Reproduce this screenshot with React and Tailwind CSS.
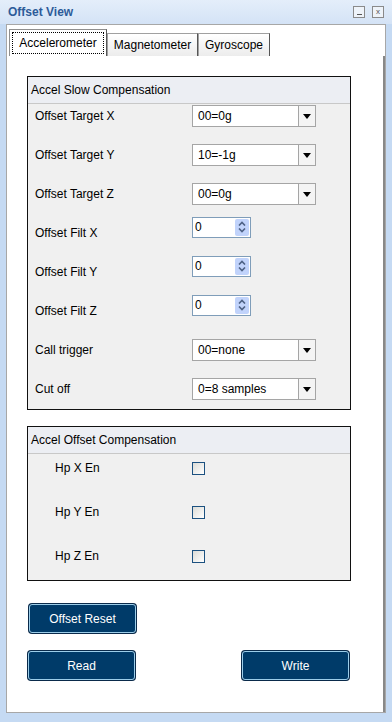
import React from "react";

const font = { fontFamily: '"Liberation Sans", Arial, sans-serif' };

function Combo({ value }) {
  return (
    <div className="flex h-[22px] w-[124px] border border-[#a5a5a5] bg-white">
      <div className="flex-1 flex items-center pl-[5px] text-[12px] text-black">{value}</div>
      <div className="w-[17px] border-l border-[#a5a5a5] bg-[#f4f4f4] flex items-center justify-center">
        <svg width="8" height="5" viewBox="0 0 8 5"><path d="M0 0h8L4 5z" fill="#000" /></svg>
      </div>
    </div>
  );
}

function Spinner() {
  return (
    <div className="flex h-[21px] w-[59px] mb-[12px] border border-[#7f9db9] bg-white">
      <div className="flex-1 flex items-center pl-[2px] text-[12px] text-black">0</div>
      <div className="w-[14px] my-[1px] mr-[1px] rounded-[2px] bg-[#c1d3fb] flex flex-col items-center justify-center gap-[2px]">
        <svg width="8" height="5" viewBox="0 0 8 5"><path d="M1 4.5L4 1.5L7 4.5" stroke="#4d6185" strokeWidth="1.6" fill="none" /></svg>
        <svg width="8" height="5" viewBox="0 0 8 5"><path d="M1 0.5L4 3.5L7 0.5" stroke="#4d6185" strokeWidth="1.6" fill="none" /></svg>
      </div>
    </div>
  );
}

function Row({ label, children }) {
  return (
    <div className="flex items-center h-[22px]">
      <div className="w-[164px] pl-[7px] text-[12px] text-black">{label}</div>
      {children}
    </div>
  );
}

function CheckRow({ label }) {
  return (
    <div className="flex items-center h-[22px]">
      <div className="w-[164px] pl-[27px] text-[12px] text-black">{label}</div>
      <div className="w-[13px] h-[13px] border border-[#1c5180] bg-gradient-to-br from-[#dcdcd7] to-white" />
    </div>
  );
}

function Btn({ children }) {
  return (
    <div className="w-[107px] h-[29px] rounded-[3px] border border-[#9ccde9] bg-[#003b69] shadow-[0_0_0_1px_#0a2a4a] flex items-center justify-center text-[12px] text-white">
      {children}
    </div>
  );
}

export default function App() {
  return (
    <div style={font} className="w-[392px] h-[722px] bg-[#c5daf3] flex flex-col overflow-hidden">
      <div className="h-[24px] flex items-center justify-between pl-[8px] pr-[8px] bg-gradient-to-b from-[#e4eefa] to-[#d4e3f6]">
        <div className="text-[12px] font-bold text-[#2d5b99]">Offset View</div>
        <div className="flex gap-[7px]">
          <div className="w-[12px] h-[12px] border border-[#8a8a8a] bg-[#eef3f9] flex items-end justify-center pb-[2px]">
            <div className="w-[5px] h-[1px] bg-[#555]" />
          </div>
          <div className="w-[12px] h-[12px] border border-[#8a8a8a] bg-[#eef3f9] flex items-center justify-center text-[8px] leading-none text-[#555]">x</div>
        </div>
      </div>
      <div className="flex-1 mx-[6px] mb-[9px] border border-[#a7a7a7] bg-white flex flex-col">
        <div className="flex items-end pl-[2px] pt-[4px] h-[31px]">
          <div className="h-[27px] w-[98px] border border-b-0 border-[#8f8f8f] border-r-[#555] bg-white p-[2px]">
            <div className="h-full border border-dotted border-black flex items-center justify-center text-[12px] text-black">Accelerometer</div>
          </div>
          <div className="h-[23px] w-[91px] border border-b-0 border-[#a0a0a0] border-r-[#555] bg-gradient-to-b from-white to-[#ececec] flex items-center justify-center text-[12px] text-black">Magnetometer</div>
          <div className="h-[23px] w-[72px] border border-b-0 border-[#a0a0a0] border-r-[#555] bg-gradient-to-b from-white to-[#ececec] flex items-center justify-center text-[12px] text-black">Gyroscope</div>
        </div>
        <div className="flex-1 border-r-2 border-[#888] pl-[20px] pt-[20px]">
          <div className="w-[324px] h-[334px] border border-[#111] bg-[#f0f0f0]">
            <div className="h-[27px] bg-[#eceef3] border-b border-[#c8c8c8] flex items-center pl-[3px] text-[12px] text-black">Accel Slow Compensation</div>
            <div className="pt-[1px] flex flex-col gap-[17px]">
              <Row label="Offset Target X"><Combo value="00=0g" /></Row>
              <Row label="Offset Target Y"><Combo value="10=-1g" /></Row>
              <Row label="Offset Target Z"><Combo value="00=0g" /></Row>
              <Row label="Offset Filt X"><Spinner /></Row>
              <Row label="Offset Filt Y"><Spinner /></Row>
              <Row label="Offset Filt Z"><Spinner /></Row>
              <Row label="Call trigger"><Combo value="00=none" /></Row>
              <Row label="Cut off"><Combo value="0=8 samples" /></Row>
            </div>
          </div>
          <div className="mt-[16px] w-[324px] h-[155px] border border-[#111] bg-[#f0f0f0]">
            <div className="h-[27px] bg-[#eceef3] border-b border-[#c8c8c8] flex items-center pl-[3px] text-[12px] text-black">Accel Offset Compensation</div>
            <div className="pt-[3px] flex flex-col gap-[22px]">
              <CheckRow label="Hp X En" />
              <CheckRow label="Hp Y En" />
              <CheckRow label="Hp Z En" />
            </div>
          </div>
          <div className="mt-[23px] pl-[2px]"><Btn>Offset Reset</Btn></div>
          <div className="mt-[18px] flex">
            <div className="pl-[1px]"><Btn>Read</Btn></div>
            <div className="ml-[107px]"><Btn>Write</Btn></div>
          </div>
        </div>
      </div>
    </div>
  );
}
